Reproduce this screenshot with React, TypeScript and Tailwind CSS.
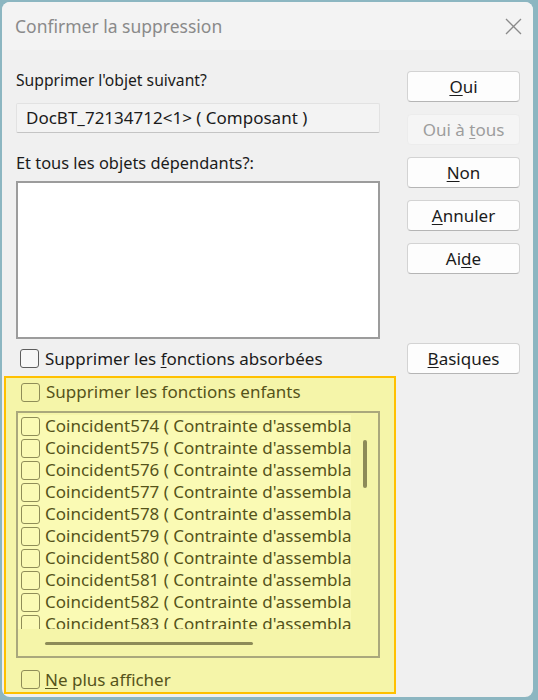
import clsx from "clsx";

const items = [574, 575, 576, 577, 578, 579, 580, 581, 582, 583];

function Check({ olive }: { olive?: boolean }) {
  return (
    <span
      className={clsx(
        "w-[19px] h-[19px] rounded-[3px] border shrink-0",
        olive ? "border-[#8f8d58]" : "border-[#5d5d5d] bg-[#f7f7f7]"
      )}
    />
  );
}

function Btn({ children, disabled, first }: { children: React.ReactNode; disabled?: boolean; first?: boolean }) {
  return (
    <div
      className={clsx(
        "h-[31px] rounded-[4px] flex items-center justify-center text-[17px] leading-[20px]",
        first ? "" : "mt-[12px]",
        disabled
          ? "bg-[#f5f5f5] border border-[#ececec] text-[#9d9d9d]"
          : "bg-[#fdfdfd] border border-[#d3d3d3] border-b-[#b5b5b5] text-[#1b1b1b]"
      )}
    >
      {children}
    </div>
  );
}

export default function App() {
  return (
    <div className="w-[538px] h-[700px] bg-[#8cb6c1] pt-[2px] pl-[2px] pr-[5px] pb-[3px] font-['Noto_Sans',sans-serif]">
      <div className="h-full bg-[#f0f0f0] rounded-[8px] flex flex-col overflow-hidden">
        {/* title bar */}
        <div className="h-[48px] shrink-0 bg-[#f3f3f3] flex items-center justify-between pl-[13px] pr-[11px]">
          <span className="text-[17.5px] text-[#8a8a8a]">Confirmer la suppression</span>
          <svg width="17" height="17" viewBox="0 0 17 17">
            <path d="M1 1 L16 16 M16 1 L1 16" stroke="#8a8a8a" strokeWidth="1.3" fill="none" />
          </svg>
        </div>

        <div className="flex flex-1 pl-[14px] pr-[13px] text-[#1b1b1b]">
          {/* left column */}
          <div className="w-[364px] flex flex-col">
            <p className="mt-[20px] text-[15.7px] leading-[20px]">Supprimer l'objet suivant?</p>
            <div className="mt-[13px] h-[30px] bg-[#f3f3f3] border border-[#e2e2e2] border-b-[#c4c4c4] rounded-[2px] flex items-center pl-[9px] text-[17px]">
              DocBT_72134712&lt;1&gt; ( Composant )
            </div>
            <p className="mt-[20px] text-[16.4px] leading-[20px]">Et tous les objets dépendants?:</p>
            <div className="mt-[8px] h-[158px] bg-white border-2 border-[#9c9c9c]" />

            <label className="mt-[10px] h-[19px] flex items-center gap-[6px] pl-[4px] text-[17px]">
              <Check />
              <span>
                Supprimer les <u className="underline-offset-2">f</u>onctions absorbées
              </span>
            </label>

            {/* highlighted area */}
            <div className="mt-[8px] -ml-[12px] -mr-[16px] h-[318px] bg-[#f5f5a9] border-2 border-[#ffc000] pl-[10px] pr-[14px] pt-[4px] text-[#55531a] text-[17px]">
              <div className="h-[20px] flex items-center gap-[6px] pl-[5px]">
                <Check olive />
                <span>Supprimer les fonctions enfants</span>
              </div>

              <div className="mt-[9px] h-[247px] border-2 border-[#aaa87c] flex flex-col">
                <div className="flex h-[225px]">
                  <div className="w-[333px] mt-[2px] h-[214px] overflow-hidden bg-[#fafab4] pl-[3px]">
                    {items.map((n) => (
                      <div key={n} className="h-[22px] flex items-center gap-[5px] whitespace-nowrap">
                        <Check olive />
                        <span>Coincident{n} ( Contrainte d'assemblage )</span>
                      </div>
                    ))}
                  </div>
                  <div className="flex-1 flex justify-center pt-[27px] pl-[1px]">
                    <div className="w-[4px] h-[48px] rounded-full bg-[#8d8b58]" />
                  </div>
                </div>
                <div className="ml-[27px] mt-[4px] w-[208px] h-[3px] rounded-full bg-[#8d8b58]" />
              </div>

              <div className="mt-[12px] h-[19px] flex items-center gap-[5px] pl-[5px]">
                <Check olive />
                <span>
                  <u className="underline-offset-2">N</u>e plus afficher
                </span>
              </div>
            </div>
          </div>

          {/* right column */}
          <div className="ml-[27px] w-[113px] flex flex-col pt-[21px]">
            <Btn first>
              <span>
                <u className="underline-offset-2">O</u>ui
              </span>
            </Btn>
            <Btn disabled>
              <span>
                Oui à <u className="underline-offset-2">t</u>ous
              </span>
            </Btn>
            <Btn>
              <span>
                <u className="underline-offset-2">N</u>on
              </span>
            </Btn>
            <Btn>
              <span>
                <u className="underline-offset-2">A</u>nnuler
              </span>
            </Btn>
            <Btn>
              <span>
                Ai<u className="underline-offset-2">d</u>e
              </span>
            </Btn>
            <div className="mt-[57px]">
              <Btn>
                <span>
                  <u className="underline-offset-2">B</u>asiques
                </span>
              </Btn>
            </div>
          </div>
        </div>
      </div>
    </div>
  );
}
